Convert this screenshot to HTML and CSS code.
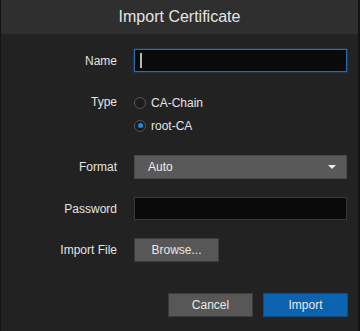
FILE: index.html
```html
<!DOCTYPE html>
<html lang="en">
<head>
    <meta charset="UTF-8">
    <title>Import Certificate</title>
    <link rel="stylesheet" href="styles.css">
</head>
<body>
    <div class="dialog">
        <div class="dialog-header">Import Certificate</div>

        <div class="form">
            <div class="form-row">
                <label>Name</label>
                <div class="text-input focused"><span class="caret"></span></div>
            </div>
            <div class="form-row type-row">
                <label>Type</label>
                <div class="radio-group">
                    <div class="radio-line"><span class="radio"></span>CA-Chain</div>
                    <div class="radio-line"><span class="radio checked"></span>root-CA</div>
                </div>
            </div>
            <div class="form-row">
                <label>Format</label>
                <div class="select">Auto<span class="select-arrow"></span></div>
            </div>
            <div class="form-row">
                <label>Password</label>
                <div class="text-input"></div>
            </div>
            <div class="form-row">
                <label>Import File</label>
                <div><button class="btn">Browse...</button></div>
            </div>
        </div>

        <div class="dialog-footer">
            <button class="btn">Cancel</button>
            <button class="btn btn-primary">Import</button>
        </div>
    </div>
</body>
</html>
```

FILE: styles.css
```css
body {
    margin: 0;
    font-family: 'Liberation Sans', Arial, sans-serif;
    font-size: 12px;
    background: #222;
    color: #e4e4e4;
}
.dialog {
    height: 331px;
    box-sizing: border-box;
    background: #222;
    border-left: 1px solid #141414;
    border-right: 2px solid #141414;
}
.dialog-header {
    height: 34px;
    line-height: 34px;
    background: #2f2f2f;
    text-align: center;
    font-size: 16px;
    color: #e4e4e4;
}
.form {
    padding-top: 15px;
    display: flex;
    flex-direction: column;
    gap: 18px;
}
.form-row {
    display: grid;
    grid-template-columns: 116px 213px;
    column-gap: 17px;
    align-items: center;
}
.form-row label {
    text-align: right;
    color: #e4e4e4;
}
.type-row {
    margin-top: 1px;
    align-items: start;
}
.type-row label {
    line-height: 23px;
}
.text-input {
    height: 23px;
    box-sizing: border-box;
    background: #0a0a0a;
    border: 1px solid #383838;
    display: flex;
    align-items: center;
    padding-left: 5px;
}
.text-input.focused {
    border-color: #2a6cb0;
    box-shadow: 0 0 2px #1f5a96;
}
.caret {
    width: 2px;
    height: 15px;
    background: #b8b8b8;
}
.radio-group {
    display: flex;
    flex-direction: column;
}
.radio-line {
    height: 23px;
    display: flex;
    align-items: center;
    gap: 5px;
    color: #e4e4e4;
}
.radio {
    width: 12px;
    height: 12px;
    box-sizing: border-box;
    border: 1.5px solid #555;
    border-radius: 50%;
    background: #1c1c1c;
    display: flex;
    align-items: center;
    justify-content: center;
}
.radio.checked::after {
    content: '';
    width: 5px;
    height: 5px;
    border-radius: 50%;
    background: #1a8ae4;
}
.select {
    height: 24px;
    box-sizing: border-box;
    background: #595959;
    border: 1px solid #4a4a4a;
    display: flex;
    align-items: center;
    justify-content: space-between;
    padding: 0 10px 0 13px;
    color: #eee;
}
.select-arrow {
    width: 0;
    height: 0;
    border-left: 4px solid transparent;
    border-right: 4px solid transparent;
    border-top: 4px solid #eee;
}
.btn {
    width: 85px;
    height: 24px;
    background: #575757;
    border: 1px solid #3c3c3c;
    color: #e8e8e8;
    font-family: 'Liberation Sans', Arial, sans-serif;
    font-size: 12px;
    padding: 0;
}
.btn-primary {
    background: #0b63af;
    border-color: #0a4f8c;
}
.dialog-footer {
    margin-top: 31px;
    display: flex;
    justify-content: flex-end;
    gap: 10px;
    padding-right: 10px;
}
```
